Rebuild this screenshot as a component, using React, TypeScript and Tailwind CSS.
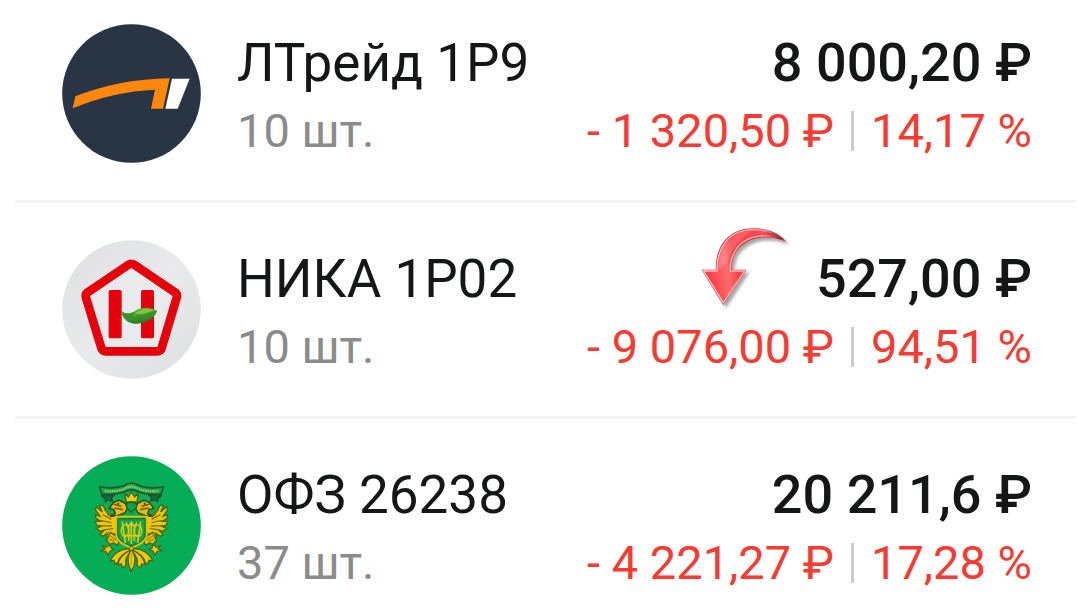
import type { ReactNode } from "react";

type Holding = {
  name: string;
  quantity: string;
  value: string;
  change: string;
  percent: string;
  logo: ReactNode;
  marked?: boolean;
};

function TradeLogo() {
  return (
    <svg viewBox="36 29 417 417" className="size-full" aria-hidden="true">
      <circle cx="244.500" cy="237.500" r="208" fill="#293544" />
      <path d="M76 246Q210 194 359 192L339 283H303L315 226Q190 231 68 282Z" fill="#ff870b" />
      <path d="M366 193H419L383 283H346Z" fill="#fff" />
    </svg>
  );
}

function NikaLogo() {
  return (
    <svg viewBox="36 29 417 417" className="size-full" aria-hidden="true">
      <defs>
        <linearGradient id="nika-bg" x1="0" y1="0" x2="1" y2="1">
          <stop offset="0" stopColor="#dfe0e2" />
          <stop offset="0.5" stopColor="#e9eaec" />
          <stop offset="1" stopColor="#dddfe1" />
        </linearGradient>
        <linearGradient id="nika-leaf" x1="0" y1="0" x2="0.4" y2="1">
          <stop offset="0" stopColor="#77bd35" />
          <stop offset="0.5" stopColor="#4aa52c" />
          <stop offset="1" stopColor="#237b25" />
        </linearGradient>
      </defs>
      <circle cx="244.500" cy="237.500" r="208" fill="url(#nika-bg)" />
      <path
        d="M234 104Q244 97 254 104L375 186Q383 192 380 202L335 353Q332 363 321 363H168Q157 363 154 353L108 202Q105 192 113 186Z"
        fill="#e9eaec"
        stroke="#e5000b"
        strokeWidth="26"
        strokeLinejoin="round"
      />
      <rect x="176" y="179" width="39" height="145" rx="5" fill="#e5000b" />
      <rect x="273" y="179" width="39" height="145" rx="5" fill="#e5000b" />
      <path d="M213 242C226 252 240 252 254 243C270 231 296 227 322 242C314 263 288 280 257 280C234 280 217 265 213 242Z" fill="url(#nika-leaf)" />
      <path d="M213 242C226 252 240 252 254 243C242 258 250 266 268 268C244 276 218 268 213 242Z" fill="#36912b" />
      <path d="M256 262C276 262 298 254 318 243" fill="none" stroke="#2f8c2a" strokeWidth="4" />
      <path d="M254 250C268 236 290 232 314 239C294 246 274 254 254 250Z" fill="#83c63f" />
    </svg>
  );
}

function EagleHalf() {
  return (
    <g>
      <path
        d="M202 202L176 207L158 176L149 179L157 197L139 181L136 190L150 210L136 205L138 216L152 225L135 225L141 237L156 239L139 246L150 255L164 251L150 264L158 270L173 260L169 273L178 276L186 264L199 262Z"
        fill="#f3c500"
        stroke="#43691a"
        strokeWidth="4"
      />
      <path d="M158 205L184 219M152 222L184 229M154 238L186 239M162 251L190 246M163 190L186 210" stroke="#78790e" strokeWidth="4" fill="none" />
      <path
        d="M178 186L190 169L207 162L226 171L232 187L224 200L202 208L180 211L196 202L192 190Z"
        fill="#e6bd08"
        stroke="#30431b"
        strokeWidth="4"
      />
      <path d="M190 173L214 180M193 185L219 190" stroke="#765f12" strokeWidth="5" />
      <circle cx="205" cy="172" r="3" fill="#173f24" />
      <path d="M156 149L176 148L193 145L184 155L188 164L174 160L166 167L165 157Z" fill="#087540" stroke="#244c2b" strokeWidth="4" />
      <path d="M181 258L195 267L207 286L202 297L191 290L179 294L169 280L175 272Z" fill="#e5c009" stroke="#4b6516" strokeWidth="4" />
      <path d="M176 278L193 285M181 269L198 281" stroke="#80720f" strokeWidth="3" />
      <path d="M157 297L169 303L180 295L183 305L192 309L180 315L174 326L167 315L154 313L165 308Z" fill="#f1c805" stroke="#4b6516" strokeWidth="4" />
      <path d="M239 308C213 306 190 321 181 344L192 342L195 353L204 348C207 331 223 320 240 313Z" fill="#f2c704" stroke="#4b6516" strokeWidth="4" />
      <path d="M241 312C221 319 207 337 203 355L214 353L218 365L228 357C225 341 231 326 242 317Z" fill="#f2c704" stroke="#4b6516" strokeWidth="4" />
    </g>
  );
}

function TreasuryLogo() {
  return (
    <svg viewBox="36 29 417 417" className="size-full" aria-hidden="true">
      <circle cx="244.500" cy="237.500" r="208" fill="#05ad57" />
      <EagleHalf />
      <g transform="translate(489 0) scale(-1 1)">
        <EagleHalf />
      </g>
      <path d="M149 122Q190 128 220 119Q244 101 269 119Q299 128 340 122L333 144Q293 146 267 136Q244 125 222 136Q195 146 156 144Z" fill="#0caa52" stroke="#205331" strokeWidth="5" />
      <path d="M164 134Q202 137 223 128Q244 114 266 128Q287 137 325 134" fill="none" stroke="#9bc653" strokeWidth="7" strokeDasharray="5 2" />
      <path d="M224 140L235 152L244 137L254 152L265 140L261 167H229Z" fill="#f5cb05" stroke="#45651b" strokeWidth="4" />
      <path d="M230 172Q244 162 259 172V184L244 198L230 184Z" fill="#05a652" stroke="#275c29" strokeWidth="4" />
      <path d="M199 211H290V270Q283 293 244 304Q206 293 199 270Z" fill="#08a650" stroke="#e2bd08" strokeWidth="6" />
      <path d="M204 217H285V269Q279 286 244 298Q210 286 204 269Z" fill="none" stroke="#186b35" strokeWidth="3" />
      <g fill="none" stroke="#e7c40d" strokeWidth="5">
        <path d="M244 228V292M236 240V284M253 240V284M217 226L226 290M272 226L263 290M228 228L235 242L244 228L253 242L261 228M224 268H265" />
        <ellipse cx="225" cy="253" rx="11" ry="17" />
        <ellipse cx="264" cy="253" rx="11" ry="17" />
      </g>
      <path d="M244 310C233 325 232 342 237 359L244 375L252 359C257 342 256 325 244 310Z" fill="#f5cb05" stroke="#4b6516" strokeWidth="4" />
      <path d="M244 319V357" stroke="#aca00d" strokeWidth="3" />
      <circle cx="244" cy="306" r="6" fill="#efc507" stroke="#4b6516" strokeWidth="3" />
    </svg>
  );
}

function CurvedArrow() {
  return (
    <svg
      viewBox="0 0 330 300"
      className="absolute top-[13px] right-[276px] h-[100px] w-[110px]"
      aria-hidden="true"
    >
      <defs>
        <linearGradient id="arrow-fill" x1="0" y1="0.3" x2="1" y2="0.1">
          <stop offset="0" stopColor="#ff3e43" />
          <stop offset="0.24" stopColor="#ff6c70" />
          <stop offset="0.36" stopColor="#ff4147" />
          <stop offset="0.78" stopColor="#ff4a50" />
          <stop offset="0.92" stopColor="#c92730" />
          <stop offset="1" stopColor="#5b1015" />
        </linearGradient>
        <linearGradient id="arrow-edge" x1="0" y1="0" x2="1" y2="0">
          <stop offset="0" stopColor="#ffc5c7" />
          <stop offset="0.75" stopColor="#ffaaae" />
          <stop offset="1" stopColor="#8a1820" />
        </linearGradient>
        <filter id="arrow-shadow" x="-20%" y="-20%" width="150%" height="150%">
          <feDropShadow dx="8" dy="9" stdDeviation="5" floodColor="#000" floodOpacity="0.35" />
        </filter>
      </defs>
      <path
        d="M35 161H77C76 91 115 37 190 37C234 37 270 52 289 78C240 58 194 61 160 86C134 104 126 129 126 161H170L100 267Z"
        fill="#bd4047"
        filter="url(#arrow-shadow)"
      />
      <path
        d="M41 165H81C80 93 118 41 190 41C228 41 257 51 276 69C231 54 187 57 155 82C128 104 121 131 121 165H164L100 260Z"
        fill="url(#arrow-fill)"
        stroke="url(#arrow-edge)"
        strokeWidth="4"
      />
      <path d="M85 163C85 98 121 48 186 45C161 58 133 89 119 119C113 143 94 158 85 163Z" fill="#fff" opacity="0.15" />
    </svg>
  );
}

const holdings: Holding[] = [
  {
    name: "ЛТрейд 1Р9",
    quantity: "10 шт.",
    value: "8 000,20 ₽",
    change: "- 1 320,50 ₽",
    percent: "14,17 %",
    logo: <TradeLogo />,
  },
  {
    name: "НИКА 1Р02",
    quantity: "10 шт.",
    value: "527,00 ₽",
    change: "- 9 076,00 ₽",
    percent: "94,51 %",
    logo: <NikaLogo />,
    marked: true,
  },
  {
    name: "ОФЗ 26238",
    quantity: "37 шт.",
    value: "20 211,6 ₽",
    change: "- 4 221,27 ₽",
    percent: "17,28 %",
    logo: <TreasuryLogo />,
  },
];

function HoldingRow({ holding }: { holding: Holding }) {
  return (
    <li className="relative flex items-start border-b-3 border-[#f3f4f5] pt-[37px] pr-11 pb-[35px] pl-[47px] whitespace-nowrap first:pt-6 last:border-b-0 last:pb-2">
      <div className="size-[139px] shrink-0">{holding.logo}</div>
      <div className="ml-9 flex-1 pt-[5px]">
        <h2 className="text-[53px] leading-[68px] font-normal text-[#151616]">{holding.name}</h2>
        <p className="text-[47px] leading-[68px] text-[#8b8b8b]">{holding.quantity}</p>
      </div>
      <div className="flex flex-col items-end pt-[5px]">
        <p className="text-[54px] leading-[68px] font-medium text-[#151616]">{holding.value}</p>
        <div className="flex items-center gap-[17px] text-[47px] leading-[68px] text-[#f83b32]">
          <span>{holding.change}</span>
          <span className="h-10 w-[3px] bg-[#cccccc]" />
          <span>{holding.percent}</span>
        </div>
      </div>
      {holding.marked && <CurvedArrow />}
    </li>
  );
}

export default function App() {
  return (
    <main className="bg-white px-[15px] font-['Roboto','Noto_Sans',sans-serif]">
      <ul>
        {holdings.map((holding) => (
          <HoldingRow key={holding.name} holding={holding} />
        ))}
      </ul>
    </main>
  );
}
